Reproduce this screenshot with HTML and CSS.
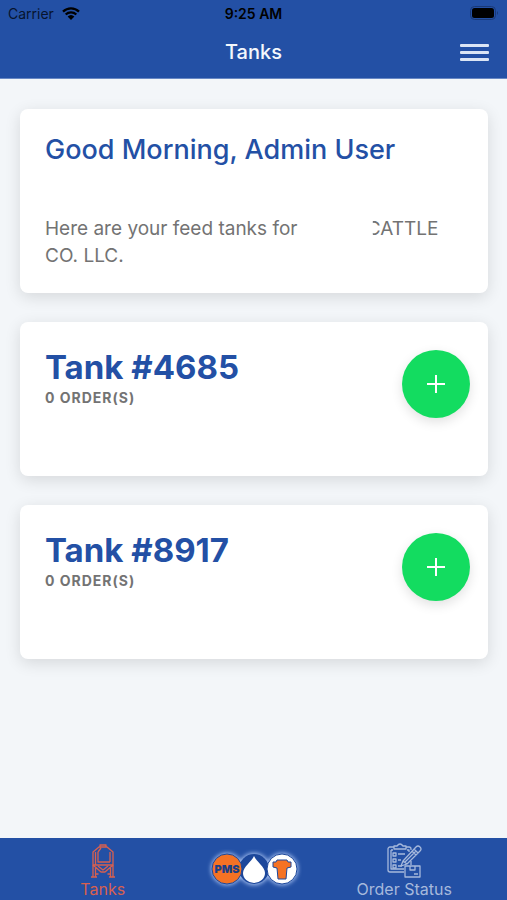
FILE: index.html
```html
<!DOCTYPE html>
<html lang="en">

<head>
  <meta charset="UTF-8" />
  <meta name="viewport" content="width=device-width, initial-scale=1.0" />
  <meta name="theme-color" content="#2350a5" />

  <title>Tanks</title>
  <link rel="stylesheet" href="styles.css">
</head>

<body>
  <header class="header">
    <div class="status">
      <span class="carrier">
        Carrier
        <svg class="wifi" viewBox="0 0 18 13" aria-hidden="true">
          <path d="M1 4.6a11.6 11.6 0 0 1 16 0M3.7 7.5a7.7 7.7 0 0 1 10.6 0" fill="none" stroke="currentColor" stroke-width="2.3" />
          <path d="M5.6 9.5a5 5 0 0 1 6.8 0L9 13z" fill="currentColor" />
        </svg>
      </span>
      <span class="time">9:25 AM</span>
      <svg class="battery" viewBox="0 0 29 14" aria-hidden="true">
        <rect x=".5" y=".5" width="25" height="13" rx="4" fill="none" stroke="#1a3977" />
        <rect x="2" y="2" width="22" height="10" rx="2.5" fill="#000" />
        <path d="M27 5v4q2-2 0-4" fill="#1a3977" />
      </svg>
    </div>
    <div class="navbar">
      <h1 class="title">Tanks</h1>
      <button class="menu" type="button" aria-label="Menu">
        <span></span>
        <span></span>
        <span></span>
      </button>
    </div>
  </header>

  <main class="content">
    <section class="card">
      <h2 class="greeting">Good Morning, Admin User</h2>
      <p class="intro">Here are your feed tanks for <span class="hidden-name"></span><span class="cut">CATTLE</span> CO. LLC.</p>
    </section>

    <section class="card tank">
      <div>
        <h2 class="tank-name">Tank #4685</h2>
        <p class="orders">0 ORDER(S)</p>
      </div>
      <button class="add" type="button" aria-label="Add order for tank 4685">
        <svg viewBox="0 0 18 18" aria-hidden="true"><path d="M9 0v18M0 9h18" /></svg>
      </button>
    </section>

    <section class="card tank">
      <div>
        <h2 class="tank-name">Tank #8917</h2>
        <p class="orders">0 ORDER(S)</p>
      </div>
      <button class="add" type="button" aria-label="Add order for tank 8917">
        <svg viewBox="0 0 18 18" aria-hidden="true"><path d="M9 0v18M0 9h18" /></svg>
      </button>
    </section>
  </main>

  <nav class="tabs">
    <a class="tab active" href="#tanks">
      <svg class="tab-icon" viewBox="0 0 36 36" aria-hidden="true">
        <path d="M15 4V2h6v2M8 9l6-5h8l6 5v13H8zM13 9v10h12M13 9l3-4M25 9v10M10.500 9v13" />
        <path d="M8 22l8 7h4l8-7M13 23l5 4 5-4M8 22v12M10.500 25v9M28 22v12M25.500 25v9M6 34h6M24 34h6M10.500 31h3M22.500 31h3" />
      </svg>
      <span>Tanks</span>
    </a>
    <a class="logo" href="#home" aria-label="PMS home">
      <svg viewBox="0 0 96 40">
        <defs>
          <filter id="glow" x="-20%" y="-30%" width="140%" height="160%">
            <feGaussianBlur stdDeviation="2" />
          </filter>
        </defs>
        <g fill="#a9c3f3" filter="url(#glow)">
          <circle cx="21" cy="20" r="16" />
          <circle cx="48" cy="20" r="16" />
          <circle cx="76" cy="20" r="16" />
        </g>
        <circle cx="48" cy="20" r="15" fill="#1c479b" />
        <circle cx="21" cy="20" r="15" fill="#f57224" stroke="#1c479b" />
        <circle cx="76" cy="20" r="15" fill="#fff" stroke="#1c479b" />
        <path d="M48 7c2 5 11 11 11 17a11 10 0 0 1-22 0c0-6 9-12 11-17z" fill="#fff" />
        <text class="logo-text" x="21" y="24" text-anchor="middle">PMS</text>
        <path d="M71 11h10l1 2h3v5l-4 1-1 11h-8l-1-11-4-1v-5h3z" fill="#f57224" stroke="#1c479b" stroke-linejoin="round" />
      </svg>
    </a>
    <a class="tab" href="#orders">
      <svg class="tab-icon" viewBox="0 0 36 36" aria-hidden="true">
        <path d="M8 4H4a2 2 0 0 0-2 2v21a2 2 0 0 0 2 2h14M20 4h3a2 2 0 0 1 2 2v1M25 18v4M8 6V3h3q3-4 6 0h3v3zM5 7h2M5 7v19h13M21 7h2v2" />
        <path d="M7 10h3v3H7zM7 16h3v3H7zM7 22h3v3H7zM12 11h7M12 17h3M12 23h4" />
        <path d="M17 18L30 4q2-2 4 0t0 4L21 21l-6 2zM28 6l4 4M26 8l4 4M17 18l4 3M19 19L30 8" />
        <path d="M19 23h15v11H19zM24 23v4h5v-4M28 31h4" />
      </svg>
      <span>Order Status</span>
    </a>
  </nav>
</body>

</html>
```

FILE: styles.css
```css
:root {
  --blue: #2350a5;
  --green: #13dc60;
  --orange: #d9604f;
  --gray: #737373;
  --page: #f3f6f9;
}

* {
  box-sizing: border-box;
}

body {
  display: flex;
  flex-direction: column;
  min-height: 100vh;
  margin: 0;
  background: var(--page);
  font-family: Inter, 'Liberation Sans', sans-serif;
}

h1,
h2,
p {
  margin: 0;
}

button {
  border: none;
  padding: 0;
  cursor: pointer;
}

a {
  text-decoration: none;
}

.header {
  background: var(--blue);
  border-bottom: 1px solid #6888c4;
}

.status {
  display: grid;
  grid-template-columns: 1fr auto 1fr;
  align-items: center;
  height: 26px;
  padding: 0 8px;
  font-size: 14px;
  color: #07142e;
}

.carrier {
  display: flex;
  align-items: center;
  gap: 8px;
}

.wifi {
  width: 18px;
  height: 13px;
  color: #000;
}

.time {
  font-weight: 600;
  color: #000;
}

.battery {
  justify-self: end;
  width: 29px;
  height: 14px;
}

.navbar {
  display: grid;
  grid-template-columns: 1fr auto 1fr;
  align-items: center;
  height: 52px;
  padding: 0 18px;
}

.title {
  grid-column: 2;
  font-size: 20px;
  font-weight: 500;
  color: #f4f7fc;
}

.menu {
  display: flex;
  flex-direction: column;
  justify-self: end;
  gap: 4px;
  width: 29px;
  background: none;
}

.menu span {
  width: 100%;
  height: 3px;
  border-radius: 1px;
  background: #dbe5f5;
}

.content {
  display: flex;
  flex: 1;
  flex-direction: column;
  gap: 29px;
  padding: 30px 19px 28px 20px;
}

.card {
  padding: 24px 25px;
  border-radius: 8px;
  background: #fff;
  box-shadow: 0 4px 16px rgba(0, 0, 0, 0.12);
}

.greeting {
  margin-bottom: 48px;
  font-size: 27px;
  font-weight: 500;
  line-height: 34px;
  color: var(--blue);
}

.intro {
  font-size: 19px;
  line-height: 27px;
  color: var(--gray);
}

/* Blank space in place of the company name */
.hidden-name {
  display: inline-block;
  width: 64px;
}

.cut {
  clip-path: inset(0 0 0 6px);
  display: inline-block;
}

.tank {
  display: flex;
  justify-content: space-between;
  min-height: 154px;
  padding: 28px 18px 28px 25px;
}

.tank-name {
  font-size: 33px;
  font-weight: 700;
  line-height: 34px;
  color: var(--blue);
}

.orders {
  margin-top: 4px;
  font-size: 14px;
  font-weight: 700;
  line-height: 20px;
  letter-spacing: 1px;
  color: var(--gray);
}

.add {
  display: grid;
  place-items: center;
  width: 68px;
  height: 68px;
  border-radius: 50%;
  background: var(--green);
  box-shadow: 0 4px 12px rgba(0, 0, 0, 0.12);
}

.add svg {
  width: 18px;
  height: 18px;
  stroke: #fff;
  stroke-width: 2;
}

.tabs {
  display: grid;
  grid-template-columns: 1fr 96px 1fr;
  align-items: center;
  height: 62px;
  background: var(--blue);
}

.tab {
  display: flex;
  flex-direction: column;
  align-items: center;
  gap: 1px;
  padding-top: 2px;
  font-size: 16px;
  line-height: 18px;
  color: #a6b9dc;
}

.tab.active {
  color: var(--orange);
}

.tab-icon {
  width: 36px;
  height: 36px;
  fill: none;
  stroke: currentColor;
  stroke-width: 1.3;
  stroke-linejoin: round;
}

.logo {
  justify-self: center;
  width: 96px;
  height: 40px;
}

.logo-text {
  font-size: 11px;
  font-weight: 900;
  fill: #1c3f86;
}
```
